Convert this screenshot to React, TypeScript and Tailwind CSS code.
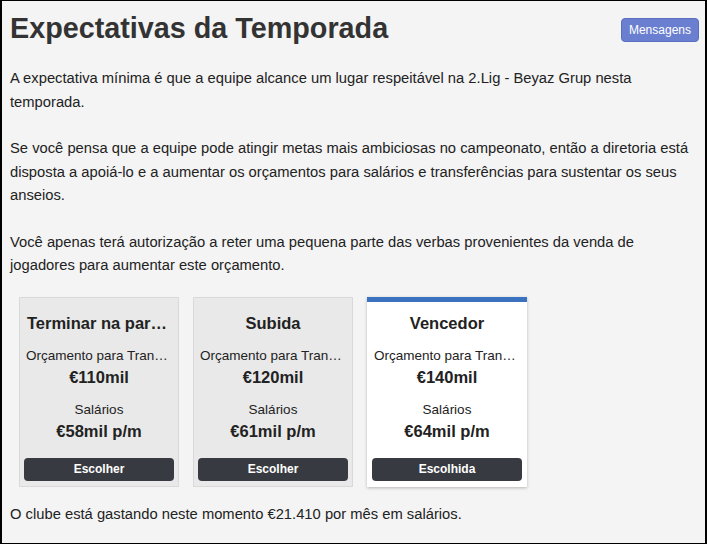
import React from "react"

type Goal = {
	title: string
	transfer: string
	wages: string
	selected?: boolean
}

const goals: Goal[] = [
	{ title: "Terminar na parte de cima da tabela", transfer: "€110mil", wages: "€58mil p/m" },
	{ title: "Subida", transfer: "€120mil", wages: "€61mil p/m" },
	{ title: "Vencedor", transfer: "€140mil", wages: "€64mil p/m", selected: true },
]

const GoalCard = ({ goal }: { goal: Goal }) => {
	return (
		<div
			className={
				goal.selected
					? "flex w-[160px] flex-col border-t-[5px] border-[#3a72bf] bg-white shadow-[0_1px_3px_rgba(0,0,0,0.25)]"
					: "flex w-[160px] flex-col border border-[#d9d9d9] bg-[#e9e9e9]"
			}
		>
			<div className={goal.selected ? "flex flex-col px-[5px] pb-[6px] pt-[9px]" : "flex flex-col px-[4px] pb-[5px] pt-[13px]"}>
				<h3 className="truncate px-[3px] text-center text-[16.5px] font-bold leading-[24px] text-[#222]">{goal.title}</h3>
				<div className="mt-[12px] truncate px-[2px] text-center text-[13.5px] leading-[18px] text-[#222]">
					Orçamento para Transferências
				</div>
				<div className="text-center text-[16.5px] font-bold leading-[24px] text-[#222]">{goal.transfer}</div>
				<div className="mt-[12px] text-center text-[13.5px] leading-[18px] text-[#222]">Salários</div>
				<div className="text-center text-[16.5px] font-bold leading-[24px] text-[#222]">{goal.wages}</div>
				<button className="mt-[15px] h-[23px] w-full rounded-[4px] bg-[#373a41] text-[12px] font-bold text-white">
					{goal.selected ? "Escolhida" : "Escolher"}
				</button>
			</div>
		</div>
	)
}

export default function App() {
	return (
		<div
			className="h-[544px] w-[707px] overflow-hidden border-x-2 border-y border-black bg-[#f4f4f4] text-[#222]"
			style={{ fontFamily: '"Liberation Sans", Arial, sans-serif' }}
		>
			<div className="flex items-start justify-between pl-[8px] pr-[6px] pt-[10px]">
				<h1 className="text-[28.75px] font-bold leading-[34px] text-[#333]">Expectativas da Temporada</h1>
				<button className="mt-[7px] h-[24px] rounded-[4px] border border-[#5a6fc0] bg-[#6a7fcf] px-[7px] text-[12px] text-white">
					Mensagens
				</button>
			</div>

			<div className="mt-[22px] pl-[8px] pr-[13px] text-[14.75px] leading-[23.5px]">
				<p>
					A expectativa mínima é que a equipe alcance um lugar respeitável na 2.Lig - Beyaz Grup nesta temporada.
				</p>
				<p className="mt-[23px]">
					Se você pensa que a equipe pode atingir metas mais ambiciosas no campeonato, então a diretoria está disposta
					a apoiá-lo e a aumentar os orçamentos para salários e transferências para sustentar os seus anseios.
				</p>
				<p className="mt-[23px]">
					Você apenas terá autorização a reter uma pequena parte das verbas provenientes da venda de jogadores para
					aumentar este orçamento.
				</p>
			</div>

			<div className="mt-[19px] flex gap-[14px] pl-[17px]">
				{goals.map((goal) => (
					<GoalCard key={goal.title} goal={goal} />
				))}
			</div>

			<p className="mt-[16px] pl-[8px] text-[14.75px] leading-[23.5px]">
				O clube está gastando neste momento €21.410 por mês em salários.
			</p>
		</div>
	)
}
